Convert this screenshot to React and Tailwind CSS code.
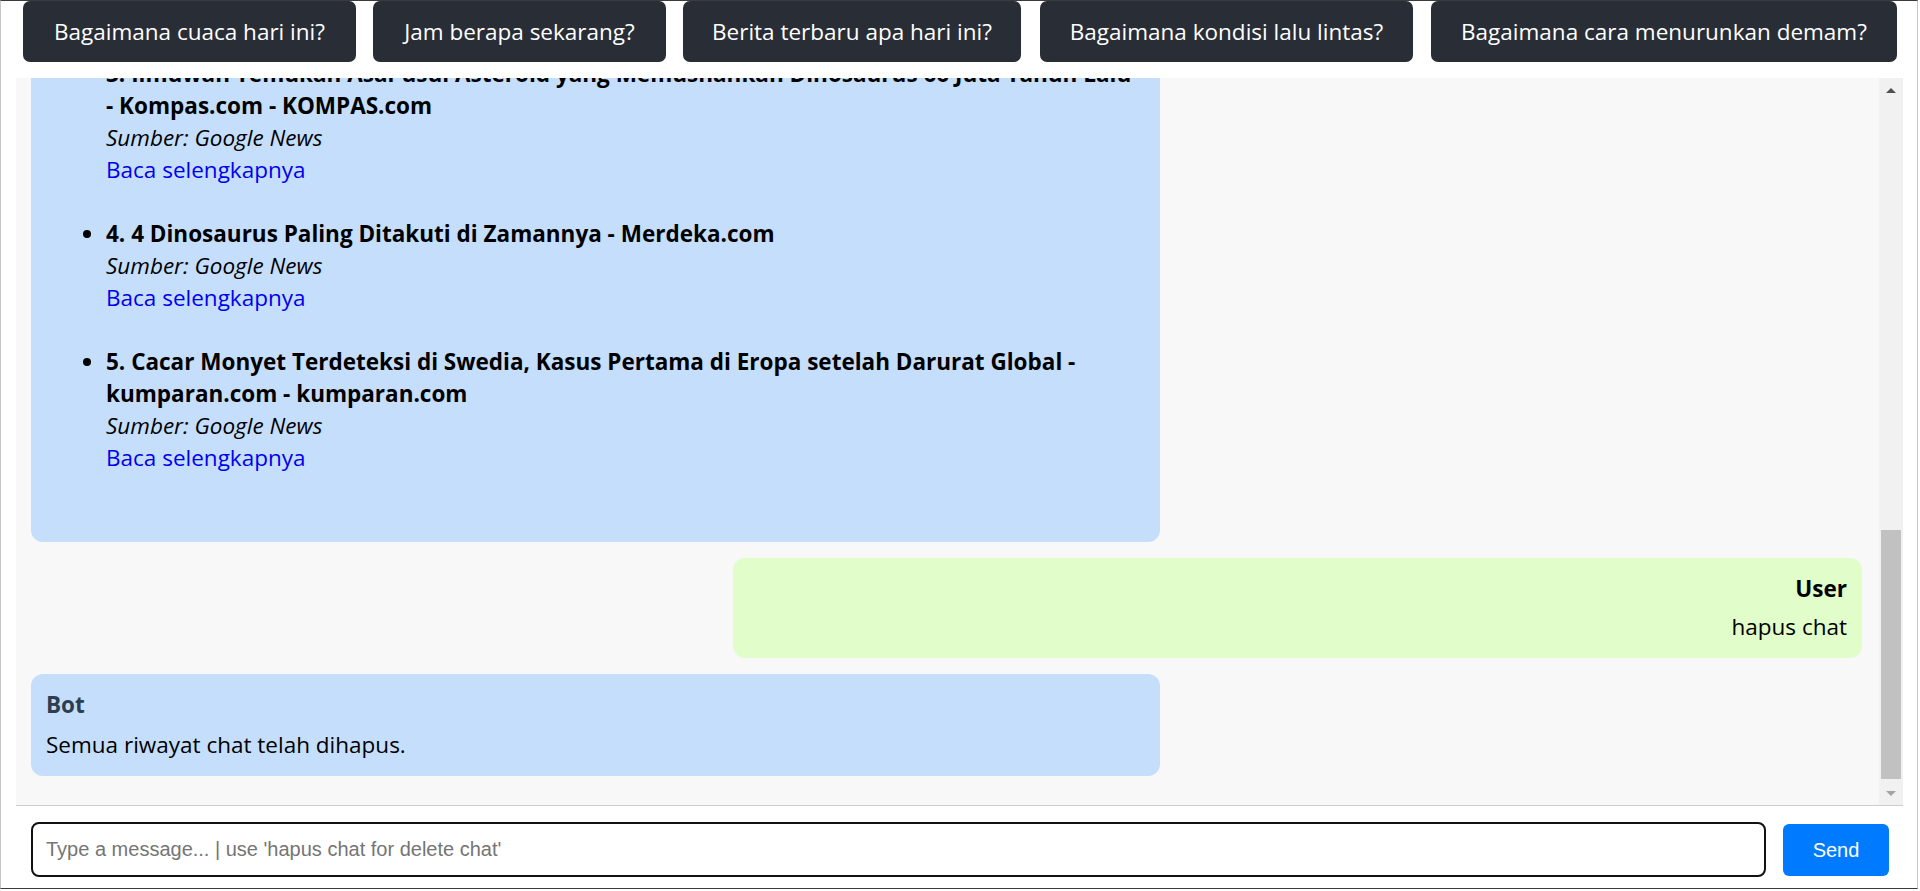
import React from "react";

const quick = [
  { label: "Bagaimana cuaca hari ini?", cls: "w-[333px]" },
  { label: "Jam berapa sekarang?", cls: "w-[293px] ml-[17px]" },
  { label: "Berita terbaru apa hari ini?", cls: "w-[338px] ml-[17px]" },
  { label: "Bagaimana kondisi lalu lintas?", cls: "w-[373px] ml-[19px]" },
  { label: "Bagaimana cara menurunkan demam?", cls: "w-[466px] ml-[18px]" },
];

const news = [
  {
    lines: [
      "3. Ilmuwan Temukan Asal-usul Asteroid yang Memusnahkan Dinosaurus 66 Juta Tahun Lalu",
      "- Kompas.com - KOMPAS.com",
    ],
  },
  { lines: ["4. 4 Dinosaurus Paling Ditakuti di Zamannya - Merdeka.com"] },
  {
    lines: [
      "5. Cacar Monyet Terdeteksi di Swedia, Kasus Pertama di Eropa setelah Darurat Global -",
      "kumparan.com - kumparan.com",
    ],
  },
];

function NewsItem({ item }) {
  return (
    <li>
      <div className="font-bold text-black whitespace-nowrap">
        {item.lines.map((l, i) => (
          <div key={i}>{l}</div>
        ))}
      </div>
      <div className="italic text-black">Sumber: Google News</div>
      <div>
        <a href="#" className="text-[#0000ee]">
          Baca selengkapnya
        </a>
      </div>
      <div className="h-[32px]" />
    </li>
  );
}

export default function App() {
  return (
    <div className="w-[1920px] h-[891px] bg-white overflow-hidden">
      <div className="w-[1918px] h-[889px] border-t border-t-[#3b3b3b] border-b border-b-[#3b3b3b] border-l border-l-[#c6c6c6] border-r border-r-[#c6c6c6] flex flex-col font-['Open_Sans',sans-serif] text-[22.5px] leading-[32px] text-black">
        {/* quick question buttons */}
        <div className="flex h-[61px] pl-[22px] shrink-0">
          {quick.map((q) => (
            <button
              key={q.label}
              className={`${q.cls} h-[61px] rounded-[7px] bg-[#282d36] text-white text-[22.5px] flex items-center justify-center whitespace-nowrap`}
            >
              {q.label}
            </button>
          ))}
        </div>

        {/* chat box */}
        <div className="mt-[16px] ml-[15px] w-[1887px] flex flex-col">
          <div className="h-[728px] border-b border-b-[#cccccc] bg-[#f8f8f8] flex">
            <div className="flex-1 overflow-hidden flex flex-col justify-end gap-[16px] pl-[15px] pr-[17px] pb-[29px]">
              <div className="w-[1129px] shrink-0 rounded-[12px] bg-[#c5defc] pt-[15px] pl-[15px] pr-[15px] pb-[15px]">
                <ul className="list-disc pl-[60px] mb-[21px]">
                  {news.map((n, i) => (
                    <NewsItem key={i} item={n} />
                  ))}
                </ul>
              </div>

              <div className="w-[1129px] shrink-0 self-end rounded-[12px] bg-[#e1fdc9] p-[15px] text-right">
                <div className="font-bold text-black mb-[6px]">User</div>
                <div>hapus chat</div>
              </div>

              <div className="w-[1129px] shrink-0 rounded-[12px] bg-[#c5defc] p-[15px]">
                <div className="font-bold text-[#2c3e50] mb-[8px]">Bot</div>
                <div>Semua riwayat chat telah dihapus.</div>
              </div>
            </div>

            {/* scrollbar */}
            <div className="w-[24px] bg-[#f1f1f1] flex flex-col shrink-0">
              <div className="h-[24px] flex items-center justify-center">
                <div className="w-0 h-0 border-x-[5px] border-x-transparent border-b-[5px] border-b-[#505050]" />
              </div>
              <div className="flex-1 flex flex-col justify-end px-[2px] pb-[2px]">
                <div className="h-[249px] bg-[#c1c1c1]" />
              </div>
              <div className="h-[24px] flex items-center justify-center">
                <div className="w-0 h-0 border-x-[5px] border-x-transparent border-t-[5px] border-t-[#a3a3a3]" />
              </div>
            </div>
          </div>

          {/* input row */}
          <div className="flex items-center pl-[15px] pt-[16px]">
            <input
              type="text"
              placeholder="Type a message... | use 'hapus chat for delete chat'"
              className="w-[1735px] h-[55px] rounded-[8px] border-2 border-[#111111] bg-white pl-[13px] font-['Liberation_Sans',Arial,sans-serif] text-[20px] text-black placeholder:text-[#757575] outline-none"
            />
            <button className="ml-[17px] w-[106px] h-[52px] rounded-[6px] bg-[#007bff] text-white font-['Liberation_Sans',Arial,sans-serif] text-[20px]">
              Send
            </button>
          </div>
        </div>
      </div>
    </div>
  );
}
